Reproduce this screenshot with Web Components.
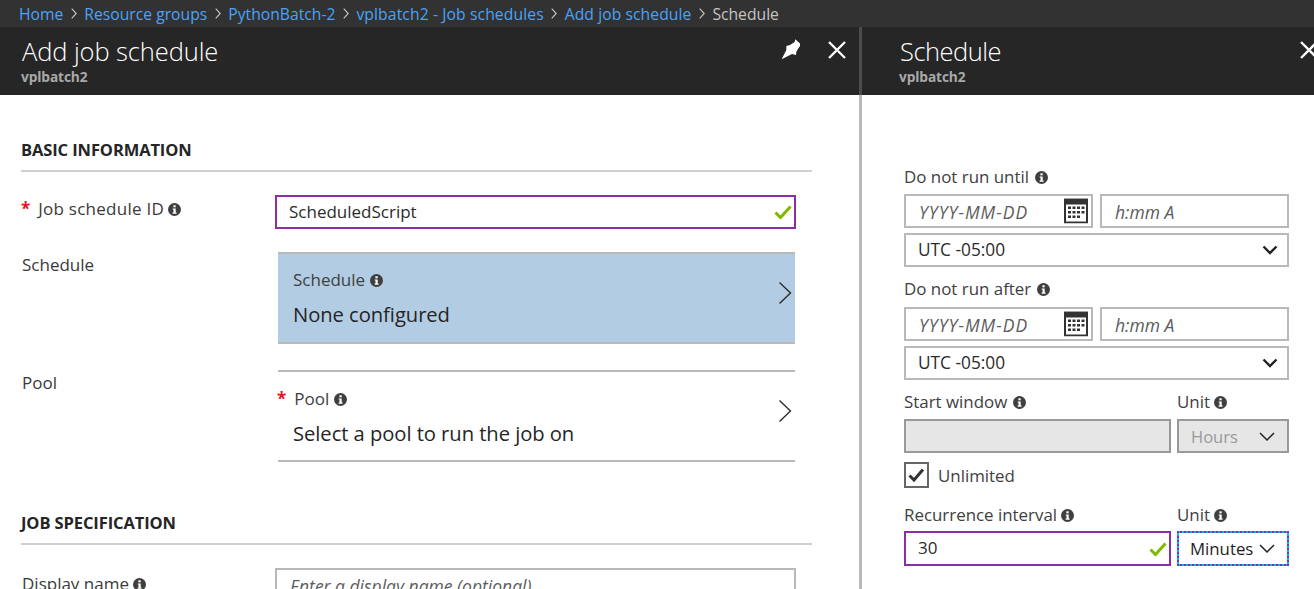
<!DOCTYPE html>
<html lang="en"><head><meta charset="utf-8"><title>Schedule</title>
<style>
html,body{margin:0;padding:0;height:589px;overflow:hidden;background:#fff}
body{font-family:"Open Sans","Liberation Sans",sans-serif;display:flex;flex-direction:column}
.blades{display:flex;flex:1;min-height:0;overflow:hidden}
</style></head><body>
<template id="info-t"><style>:host{display:inline-flex;vertical-align:middle;margin-left:var(--im,4px);position:relative;top:-1px}svg{display:block}</style>
<svg width="13" height="13" viewBox="0 0 13 13"><circle cx="6.5" cy="6.5" r="6.5" fill="#3f3f3f"/><rect x="5.4" y="2.3" width="2.3" height="2" fill="#fff"/><path d="M4.7 5.4h3v4.1h.9v1.2H4.6V9.500h.9V6.600h-.8z" fill="#fff"/></svg></template>

<script>
const def=(name,html)=>{customElements.define(name,class extends HTMLElement{
  constructor(){super();this.attachShadow({mode:'open'}).innerHTML=html;}
});};
customElements.define('az-info',class extends HTMLElement{constructor(){super();this.attachShadow({mode:'open'}).appendChild(document.getElementById('info-t').content.cloneNode(true));}});

def('az-crumbs',`<style>:host{display:flex;align-items:center;height:27px;flex:none;background:#323232;padding-left:19px;font-size:15.700px;color:#4aa3f7;white-space:nowrap;box-sizing:border-box}::slotted(svg){margin:0 7.500px 0 7.500px}::slotted(.cur){color:#c4c4c4}</style><slot></slot>`);

def('az-blade',`<style>:host{display:flex;flex-direction:column;box-sizing:border-box;min-width:0;position:relative;flex:none}
header{height:68px;flex:none;background:#262626;box-sizing:border-box;padding-left:var(--title-x,22px);position:relative;overflow:hidden}
h1{margin:0;font-weight:300;font-size:25.500px;line-height:32px;padding-top:8px;color:#fff;letter-spacing:var(--title-ls,-.1px)}
p{margin:1px 0 0 -1px;font-weight:700;font-size:13.700px;line-height:18px;color:#a9a9a9;letter-spacing:-.1px}
.act{position:absolute;top:0;right:0;left:0;height:100%;pointer-events:none}
main{flex:1;min-height:0;overflow:hidden;box-sizing:border-box}
</style><header><h1><slot name="title"></slot></h1><p><slot name="sub"></slot></p><div class="act"><slot name="actions"></slot></div></header><main><slot></slot></main>`);

def('az-section',`<style>:host{display:block}div{font-weight:700;font-size:16.500px;line-height:19px;color:#252525;padding-bottom:11px;border-bottom:2px solid #d0d0d0;letter-spacing:-.1px}</style><div><slot></slot></div>`);

def('az-row',`<style>:host{display:grid;grid-template-columns:254px 521px;font-size:17px;line-height:20px;color:#3a3a3a}.l{padding-top:var(--lt,3px);padding-left:1px;white-space:nowrap}</style><div class="l"><slot name="label"></slot></div><div><slot></slot></div>`);

def('az-input',`<style>:host{display:flex;align-items:center;box-sizing:border-box;height:34px;min-width:0;border:2px solid #b9b9b9;background:#fff;padding-left:var(--pl,12px);font-size:17px;color:#2b2b2b;position:relative;white-space:nowrap;overflow:hidden}
:host([valid]){border-color:#8c2da6}
:host([ph]){font-style:italic;color:#5c5c5c;font-size:17.500px;padding-left:13px;padding-top:1px}
:host([disabled]){background:#e6e6e6;border-color:#999}
:host([compact]){height:35px;padding-bottom:2px}
.e{position:absolute;right:var(--er,2px);top:50%;transform:translateY(-50%);display:flex}
</style><slot></slot><span class="e"><slot name="end"></slot></span>`);

def('az-select',`<style>:host{display:flex;align-items:center;justify-content:space-between;box-sizing:border-box;height:34px;min-width:0;border:2px solid #b9b9b9;background:#fff;padding:0 var(--pr,9px) 0 12px;font-size:17.300px;color:#2b2b2b;white-space:nowrap}
:host([disabled]){background:#e6e6e6;border-color:#999;color:#999;font-size:16.500px;--pr:12px;padding-top:1px}
:host([focus]){height:35px;border:2px dotted #8c2da6;background:linear-gradient(#fff,#fff) padding-box,#00bcf2 border-box;color:#1e1e1e;font-size:16.800px;--pr:12px;padding-left:11px}
svg{display:block;flex:none}</style><span><slot></slot></span><slot name="icon"></slot>`);

def('az-picker',`<style>:host{display:block;box-sizing:border-box;height:92px;margin:0 1px 0 3px;border-top:2px solid #b9b9b9;border-bottom:2px solid #b9b9b9;position:relative;color:#252525;--im:5px}
:host([active]){background:#b2cce4}
.lab{font-size:17px;line-height:20px;color:#404040;padding-top:var(--ptop,16px);padding-left:15px;white-space:nowrap}
.val{font-size:20.200px;line-height:26px;padding-left:15px;margin-top:11px;color:#252525;white-space:nowrap;letter-spacing:-.05px}
svg{position:absolute;right:3px;top:27px}
</style><div class="lab"><slot name="lab"></slot></div><div class="val"><slot></slot></div><svg width="14" height="24" viewBox="0 0 14 24"><path d="M1.500 1.500L12.500 12 1.500 22.500" fill="none" stroke="#2c2c2c" stroke-width="1.400"/></svg>`);

def('az-field',`<style>:host{display:block;font-size:16.900px;line-height:20px;color:#404040}.l{margin-top:var(--mt,12px);margin-bottom:var(--mb,7px);white-space:nowrap}
.g{display:grid;grid-template-columns:var(--cols,189px 189px);column-gap:var(--gap,7px)}
.s{margin-top:5px;display:block}</style><div class="l"><slot name="label"></slot></div><div class="g"><slot></slot></div><div class="s"><slot name="below"></slot></div>`);

def('az-check',`<style>:host{display:flex;align-items:center;font-size:16.900px;color:#404040;margin-top:9px;height:26px}
i{display:block;box-sizing:border-box;width:25px;height:26px;border:2px solid #666;margin-right:9px}svg{display:block}</style>
<i><svg width="21" height="22" viewBox="0 0 21 22"><path d="M3.500 11.500L8 16 17 5.500" fill="none" stroke="#333" stroke-width="3"/></svg></i><slot></slot>`);

const sep='<svg width="6" height="11" viewBox="0 0 6 11"><path d="M.7.700l4.500 4.800-4.500 4.800" fill="none" stroke="#c8c8c8" stroke-width="1.100"/></svg>';
const cal='<svg slot="end" width="24" height="25" viewBox="0 0 24 25"><rect x="1" y="1" width="22" height="23" fill="#fff" stroke="#333" stroke-width="2"/><rect width="24" height="6" fill="#333"/><path fill="#333" d="M4 8h3v2.500H4zM8.500 8h3v2.500h-3zM13 8h3v2.500h-3zM17.500 8h3v2.500h-3zM4 12.500h3V15H4zM8.500 12.500h3V15h-3zM13 12.500h3V15h-3zM17.500 12.500h3V15h-3zM4 17h3v2.500H4zM8.500 17h3v2.500h-3zM13 17h3v2.500h-3z"/></svg>';
const chevBold='<svg slot="icon" width="16" height="10" viewBox="0 0 16 10"><path d="M1.500 1.500L8 8l6.500-6.500" fill="none" stroke="#222" stroke-width="2.400"/></svg>';
const chevThin='<svg slot="icon" width="16" height="10" viewBox="0 0 16 10"><path d="M1 1l7 7 7-7" fill="none" stroke="#222" stroke-width="1.500"/></svg>';
const ok='<svg slot="end" width="18" height="15" viewBox="0 0 18 15"><path d="M1.500 8l5 5L16.500 2" fill="none" stroke="#7fba00" stroke-width="3"/></svg>';
const close='<svg slot="actions" style="position:absolute;left:LEFTpx;top:14px" width="18" height="18" viewBox="0 0 18 18"><path d="M1 1l16 16M17 1L1 17" stroke="#fff" stroke-width="2.300"/></svg>';
const star=m=>`<span style="color:#e81123;margin:0 ${m}px 0 -1px;font-weight:700">*</span>`;
const dt=`<az-input ph style="--er:3px"><span style="letter-spacing:1px">YYYY-MM-DD</span>${cal}</az-input><az-input ph>h:mm A</az-input><az-select slot="below">UTC -05:00${chevBold}</az-select>`;
const two='display:grid;grid-template-columns:273px 1fr';
document.body.insertAdjacentHTML('beforeend',`
<az-crumbs>Home${sep}Resource groups${sep}PythonBatch-2${sep}<span style="letter-spacing:.1px">vplbatch2 - Job schedules</span>${sep}<span style="letter-spacing:.06px">Add job schedule</span>${sep}<span class="cur">Schedule</span></az-crumbs>
<div class="blades">
<az-blade style="width:859px">
  <span slot="title">Add job schedule</span><span slot="sub">vplbatch2</span>
  <svg slot="actions" style="position:absolute;left:770px;top:3px" width="30" height="30" viewBox="0 0 90 90"><path d="M76 28L96 46 88 50 79 65 78 75 66 72 35 88 49 60 49 48 60 45 74 36z" fill="#fff"/></svg>
  ${close.replace('LEFT','827.5')}
  <div style="padding:45px 47px 0 21px">
    <az-section>BASIC INFORMATION</az-section>
    <az-row style="margin-top:23px;--lt:4px"><span slot="label">${star(8)}<span style="letter-spacing:.25px">Job schedule ID</span><az-info></az-info></span>
      <az-input valid>ScheduledScript${ok}</az-input></az-row>
    <az-row style="margin-top:23px"><span slot="label">Schedule</span>
      <az-picker active><span slot="lab">Schedule<az-info></az-info></span>None configured</az-picker></az-row>
    <az-row style="margin-top:26px"><span slot="label">Pool</span>
      <az-picker style="--ptop:17px"><span slot="lab" style="margin-left:-15px">${star(8)}Pool<az-info></az-info></span>Select a pool to run the job on</az-picker></az-row>
    <az-section style="margin-top:51px">JOB SPECIFICATION</az-section>
    <az-row style="margin-top:23px;--lt:6px"><span slot="label">Display name<az-info></az-info></span>
      <az-input ph>Enter a display name (optional)</az-input></az-row>
  </div>
</az-blade>
<div style="width:3px;flex:none;background:linear-gradient(#4c4c4c 68px,#b9b9b9 68px)"></div>
<az-blade style="width:452px;--title-x:38px;--title-ls:-.5px">
  <span slot="title">Schedule</span><span slot="sub">vplbatch2</span>
  ${close.replace('LEFT','438')}
  <div style="padding:60px 25px 0 42px">
    <az-field style="--mb:7px;--im:6px"><span slot="label">Do not run until<az-info></az-info></span>${dt}</az-field>
    <az-field style="--mb:8px;--mt:12px;--im:6px"><span slot="label">Do not run after<az-info></az-info></span>${dt}</az-field>
    <az-field style="--mb:7px;--mt:12px;--cols:267px 112px;--gap:6px"><span slot="label" style="${two}"><span style="--im:6px">Start window<az-info></az-info></span><span>Unit<az-info></az-info></span></span>
      <az-input disabled></az-input>
      <az-select disabled>Hours${chevThin}</az-select></az-field>
    <az-check>Unlimited</az-check>
    <az-field style="--mt:17px;--mb:6px;--cols:267px 112px;--gap:6px"><span slot="label" style="${two}"><span>Recurrence interval<az-info></az-info></span><span>Unit<az-info></az-info></span></span>
      <az-input valid compact>30${ok}</az-input>
      <az-select focus>Minutes${chevThin}</az-select></az-field>
  </div>
</az-blade>
</div>`);
</script>
</body></html>
